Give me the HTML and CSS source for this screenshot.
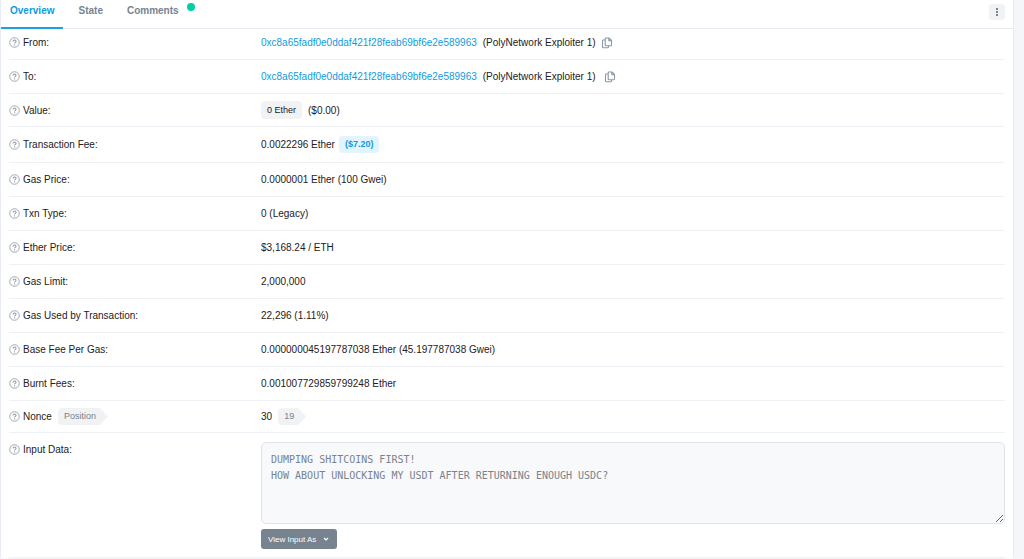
FILE: index.html
```html
<!DOCTYPE html>
<html lang="en">
<head>
  <meta charset="UTF-8" />
  <meta name="viewport" content="width=device-width, initial-scale=1.0" />
  <title>Transaction Details</title>
  <link rel="stylesheet" href="styles.css">
</head>
<body>
  <svg class="sprite" aria-hidden="true">
    <symbol id="help" viewBox="0 0 12 12">
      <circle cx="6" cy="6" r="5.2" fill="none" stroke="currentColor" stroke-width="0.9" />
      <path d="M4.4 4.8C4.4 3.7 5.1 3.2 6 3.2s1.7.6 1.7 1.5C7.7 5.8 6.1 5.8 6.1 7" fill="none" stroke="currentColor" stroke-width="1.1" />
      <circle cx="6.1" cy="8.6" r="0.7" fill="currentColor" />
    </symbol>
    <symbol id="copy" viewBox="0 0 12 12">
      <path d="M5 1h3l2.500 2.500V8q0 .8-.8.8H5q-.8 0-.8-.8V1.800Q4.200 1 5 1zM7.800 1v2.800h2.700M4.200 3H2.300q-.8 0-.8.800v6.200q0 .8.800.800h4.400q.8 0 .8-.8V8.800" fill="none" stroke="currentColor" stroke-width="1.1" stroke-linejoin="round" />
    </symbol>
  </svg>

  <main class="card">
    <header class="card-header">
      <nav class="tabs">
        <a class="tab active" href="#overview">Overview</a>
        <a class="tab" href="#state">State</a>
        <a class="tab" href="#comments">Comments<span class="dot"></span></a>
      </nav>
      <button class="more" type="button" aria-label="More options">
        <svg viewBox="0 0 4 10"><path d="M1 1h2v2H1zM1 4h2v2H1zM1 7h2v2H1z" fill="currentColor" /></svg>
      </button>
    </header>

    <dl class="details" id="overview">
      <div class="row first">
        <dt><svg class="help"><use href="#help" /></svg>From:</dt>
        <dd>
          <a href="#from">0xc8a65fadf0e0ddaf421f28feab69bf6e2e589963</a>
          <span class="name">(PolyNetwork Exploiter 1)</span>
          <button class="copy" type="button" aria-label="Copy from address"><svg><use href="#copy" /></svg></button>
        </dd>
      </div>
      <div class="row">
        <dt><svg class="help"><use href="#help" /></svg>To:</dt>
        <dd>
          <a href="#to">0xc8a65fadf0e0ddaf421f28feab69bf6e2e589963</a>
          <span class="name">(PolyNetwork Exploiter 1)</span>
          <button class="copy wide" type="button" aria-label="Copy to address"><svg><use href="#copy" /></svg></button>
        </dd>
      </div>
      <div class="row tight">
        <dt><svg class="help"><use href="#help" /></svg>Value:</dt>
        <dd><span class="badge">0 Ether</span><span class="name">($0.00)</span></dd>
      </div>
      <div class="row">
        <dt><svg class="help"><use href="#help" /></svg>Transaction Fee:</dt>
        <dd>0.0022296 Ether <span class="badge blue">($7.20)</span></dd>
      </div>
      <div class="row">
        <dt><svg class="help"><use href="#help" /></svg>Gas Price:</dt>
        <dd>0.0000001 Ether (100 Gwei)</dd>
      </div>
      <div class="row">
        <dt><svg class="help"><use href="#help" /></svg>Txn Type:</dt>
        <dd>0 (Legacy)</dd>
      </div>
      <div class="row">
        <dt><svg class="help"><use href="#help" /></svg>Ether Price:</dt>
        <dd>$3,168.24 / ETH</dd>
      </div>
      <div class="row">
        <dt><svg class="help"><use href="#help" /></svg>Gas Limit:</dt>
        <dd>2,000,000</dd>
      </div>
      <div class="row">
        <dt><svg class="help"><use href="#help" /></svg>Gas Used by Transaction:</dt>
        <dd>22,296 (1.11%)</dd>
      </div>
      <div class="row">
        <dt><svg class="help"><use href="#help" /></svg>Base Fee Per Gas:</dt>
        <dd>0.000000045197787038 Ether (45.197787038 Gwei)</dd>
      </div>
      <div class="row">
        <dt><svg class="help"><use href="#help" /></svg>Burnt Fees:</dt>
        <dd>0.001007729859799248 Ether</dd>
      </div>
      <div class="row tight">
        <dt><svg class="help"><use href="#help" /></svg>Nonce <span class="badge arrow">Position</span></dt>
        <dd>30 <span class="badge arrow">19</span></dd>
      </div>
      <div class="row input-row">
        <dt><svg class="help"><use href="#help" /></svg><label for="input-data">Input Data:</label></dt>
        <dd>
          <textarea id="input-data" readonly>DUMPING SHITCOINS FIRST!
HOW ABOUT UNLOCKING MY USDT AFTER RETURNING ENOUGH USDC?</textarea>
          <button class="view-as" type="button">View Input As
            <svg viewBox="0 0 6 6"><path d="M1.5 2.3l1.5 1.4 1.5-1.4" fill="none" stroke="currentColor" stroke-width="1" /></svg>
          </button>
        </dd>
      </div>
    </dl>
  </main>
</body>
</html>
```
FILE: styles.css
```css
* {
  box-sizing: border-box;
}

body {
  margin: 0;
  padding-right: 10px;
  background-color: #f5f6fa;
  color: #1e2022;
  font-family: "Liberation Sans", Arial, sans-serif;
  font-size: 10px;
  line-height: 15px;
}

a {
  color: #0f9be0;
  text-decoration: none;
}

button {
  border: 0;
  font-family: inherit;
  cursor: pointer;
}

.sprite {
  display: none;
}

.card {
  background-color: #fff;
  border: solid #e9ecf6;
  border-width: 0 1px;
}

.card-header {
  display: flex;
  align-items: flex-start;
  justify-content: space-between;
  height: 29px;
  padding-right: 8px;
  border-bottom: 1px solid #e7eaf3;
}

.tabs {
  display: flex;
  gap: 6px;
}

.tab {
  display: flex;
  height: 29px;
  padding: 3px 9px 0;
  border-bottom: 2px solid transparent;
  color: #77838f;
  font-weight: bold;
}

.tab.active {
  color: #0f9be0;
  border-color: #219fe3;
}

.dot {
  width: 8px;
  height: 8px;
  margin-left: 8px;
  border-radius: 50%;
  background-color: #00d0a4;
}

.more {
  display: flex;
  align-items: center;
  justify-content: center;
  width: 16px;
  height: 16px;
  margin-top: 4px;
  padding: 0;
  border-radius: 3px;
  background-color: #f0f2f4;
  color: #77838f;
}

.more svg {
  width: 4px;
  height: 10px;
}

.details {
  margin: 0;
  padding: 0 8px;
}

.row {
  display: grid;
  grid-template-columns: 1fr 3fr;
  gap: 4px;
  padding: 9px 0;
  border-bottom: 1px solid #eff1f6;
}

.row.first {
  padding-top: 6px;
}

.row.tight {
  padding: 7px 0;
}

dt,
dd {
  display: flex;
  align-items: center;
  margin: 0;
}

.help {
  width: 11px;
  height: 11px;
  margin-right: 3px;
  color: #8c98a4;
}

.name {
  margin-left: 6px;
}

.copy {
  display: flex;
  margin-left: 5px;
  padding: 0;
  background: none;
  color: #8c98a4;
}

.copy.wide {
  margin-left: 8px;
}

.copy svg {
  width: 12px;
  height: 12px;
}

.badge {
  padding: 0 6px;
  border-radius: 4px;
  background-color: #f0f2f4;
  font-size: 9px;
  line-height: 18px;
}

.badge.blue {
  margin-left: 4px;
  background-color: #e2f4fd;
  color: #0f9be0;
  font-weight: bold;
  line-height: 17px;
}

.badge.arrow {
  margin-left: 6px;
  padding-right: 12px;
  clip-path: polygon(0 0, calc(100% - 8px) 0, 100% 50%, calc(100% - 8px) 100%, 0 100%);
  color: #77838f;
  line-height: 17px;
}

.input-row {
  padding-bottom: 8px;
}

.input-row dt {
  align-self: start;
}

.input-row dd {
  display: block;
}

textarea {
  display: block;
  width: 100%;
  height: 82px;
  padding: 9px;
  border: 1px solid #dfe3ea;
  border-radius: 5px;
  outline: 0;
  background-color: #f8f9fb;
  color: #77838f;
  font-family: "DejaVu Sans Mono", monospace;
  font-size: 10px;
  line-height: 16px;
}

.view-as {
  display: flex;
  align-items: center;
  gap: 6px;
  height: 20px;
  margin-top: 5px;
  padding: 0 7px;
  border-radius: 3px;
  background-color: #77838f;
  color: #fff;
  font-size: 8px;
}

.view-as svg {
  width: 8px;
  height: 8px;
}
```
